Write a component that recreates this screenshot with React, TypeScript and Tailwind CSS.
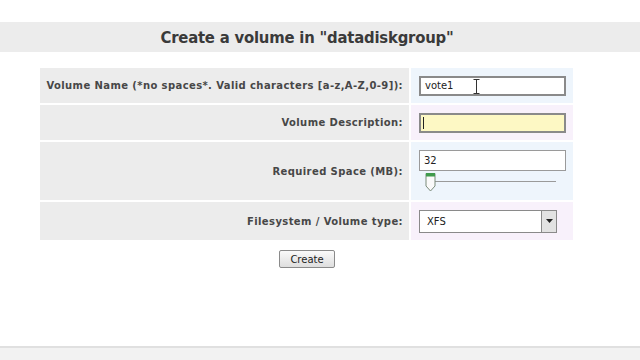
import React from 'react';

const labelFont = { fontFamily: '"DejaVu Sans", Verdana, sans-serif' };

const Row: React.FC<{ label: string; cellBg: string; height: string; children: React.ReactNode }> = ({ label, cellBg, height, children }) => (
    <div className="flex gap-[2px]">
        <div className={`w-[369px] bg-[#ececec] flex items-center justify-end pr-[6px] text-[10px] font-bold tracking-[0.4px] text-[#474747] ${height}`} style={labelFont}>
            {label}
        </div>
        <div className={`w-[162px] ${cellBg} pl-[8px] flex flex-col justify-center`}>
            {children}
        </div>
    </div>
);

export default function App() {
    return (
        <div className="w-[640px] h-[360px] bg-white flex flex-col overflow-hidden" style={labelFont}>
            <div className="h-[22px]" />
            {/* Title bar */}
            <div className="h-[30px] bg-[#ececec] flex items-center justify-center pr-[26px] pt-[2px]">
                <h1 className="text-[16.5px] font-bold text-[#3a3a3a] tracking-[-0.2px]" style={{ fontFamily: '"DejaVu Sans Condensed", Tahoma, sans-serif' }}>
                    Create a volume in "datadiskgroup"
                </h1>
            </div>

            {/* Form table */}
            <div className="mt-[16px] ml-[40px] flex flex-col gap-[2px]">
                <Row label="Volume Name (*no spaces*. Valid characters [a-z,A-Z,0-9]):" cellBg="bg-[#eef5fc]" height="h-[35px]">
                    <div className="relative w-[147px] h-[20px] border-2 border-[#8a8a8a] bg-white flex items-center pl-[4px] text-[10px] text-[#222]">
                        vote1
                        {/* I-beam cursor */}
                        <svg className="absolute left-[52px] top-[1px]" width="7" height="15" viewBox="0 0 7 15">
                            <path d="M0.5 0.5 H6.5 M3.5 0.5 V14.5 M0.5 14.5 H6.5" stroke="#333" strokeWidth="1" fill="none" />
                        </svg>
                    </div>
                </Row>
                <Row label="Volume Description:" cellBg="bg-[#f8f1fb]" height="h-[35px]">
                    <div className="w-[147px] h-[20px] border-2 border-[#8a8a8a] bg-[#fdf8c4] flex items-center pl-[2px]">
                        <div className="w-px h-[12px] bg-[#222]" />
                    </div>
                </Row>
                <Row label="Required Space (MB):" cellBg="bg-[#eef5fc]" height="h-[58px]">
                    <div className="w-[147px] h-[21px] border border-[#9a9a9a] bg-white flex items-center pl-[4px] text-[10px] text-[#222]">
                        32
                    </div>
                    <div className="relative h-[21px] w-[147px] flex items-center">
                        <div className="ml-[14px] w-[123px] h-px bg-[#9a9a9a]" />
                        <svg className="absolute left-[6px] top-[1px]" width="11" height="20" viewBox="0 0 11 20">
                            <path d="M1 1.5 H10 V14 L5.5 19 L1 14 Z" fill="#fafafa" stroke="#7b8b7b" strokeWidth="1" />
                            <rect x="1" y="1" width="9" height="3.5" fill="#3f9a4c" />
                        </svg>
                    </div>
                </Row>
                <Row label="Filesystem / Volume type:" cellBg="bg-[#f8f1fb]" height="h-[38px]">
                    <div className="w-[138px] h-[23px] border border-[#8a8a8a] bg-white flex items-center justify-between">
                        <span className="pl-[7px] text-[10px] text-[#222]">XFS</span>
                        <div className="w-[15px] h-[21px] bg-[#e2e2e2] border-l border-[#8a8a8a] flex items-center justify-center">
                            <svg width="7" height="4" viewBox="0 0 7 4"><path d="M0 0 H7 L3.5 4 Z" fill="#222" /></svg>
                        </div>
                    </div>
                </Row>
            </div>

            {/* Submit */}
            <div className="mt-[10px] flex justify-center">
                <button className="w-[56px] h-[18px] border border-[#8a8a8a] rounded-[2px] bg-gradient-to-b from-[#fafafa] to-[#dedede] text-[10px] text-[#222] ml-[-26px]" style={{ fontFamily: '"DejaVu Sans", Tahoma, sans-serif' }}>
                    Create
                </button>
            </div>

            <div className="flex-1" />
            <div className="h-[14px] bg-[#f2f2f2] border-t-2 border-[#e0e0e0]" />
        </div>
    );
}
